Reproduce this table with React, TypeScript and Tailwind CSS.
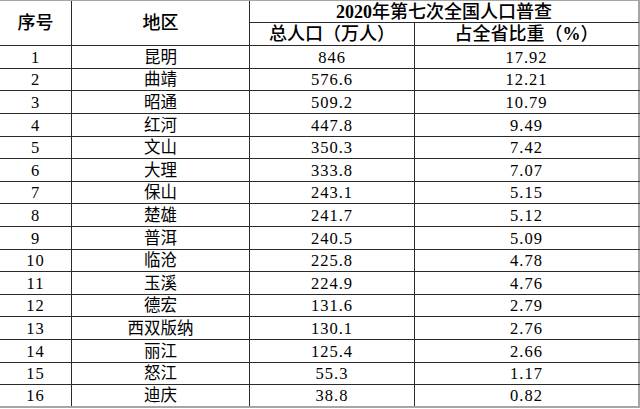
import React from 'react';

const rows: [string, string, string, string][] = [
  ['1', '昆明', '846', '17.92'],
  ['2', '曲靖', '576.6', '12.21'],
  ['3', '昭通', '509.2', '10.79'],
  ['4', '红河', '447.8', '9.49'],
  ['5', '文山', '350.3', '7.42'],
  ['6', '大理', '333.8', '7.07'],
  ['7', '保山', '243.1', '5.15'],
  ['8', '楚雄', '241.7', '5.12'],
  ['9', '普洱', '240.5', '5.09'],
  ['10', '临沧', '225.8', '4.78'],
  ['11', '玉溪', '224.9', '4.76'],
  ['12', '德宏', '131.6', '2.79'],
  ['13', '西双版纳', '130.1', '2.76'],
  ['14', '丽江', '125.4', '2.66'],
  ['15', '怒江', '55.3', '1.17'],
  ['16', '迪庆', '38.8', '0.82'],
];

// row heights add up to 362px so the last line lands at y=407
const tall = [0, 2, 3, 5, 7, 8, 10, 12, 13, 15];

const App = () => {
  return (
    <div
      className="w-[640px] h-[409px] bg-white text-black text-[16.5px] leading-none"
      style={{ fontFamily: '"Liberation Serif", "Noto Sans CJK SC", serif' }}
    >
      <div className="flex border-t border-[#a6a6a6] text-[18px] font-medium">
        <div className="w-[72px] h-[45px] flex items-center justify-center border-r border-b border-[#2b2b2b]">
          序号
        </div>
        <div className="w-[178px] h-[45px] flex items-center justify-center border-r border-b border-[#2b2b2b]">
          地区
        </div>
        <div className="w-[390px] flex flex-col">
          <div className="h-[22px] flex items-center justify-center border-b border-[#2b2b2b] border-r-2 border-r-[#a6a6a6]">
            <span className="font-bold">2020</span>年第七次全国人口普查
          </div>
          <div className="flex h-[23px]">
            <div className="w-[165px] flex items-center justify-center border-r border-b border-[#2b2b2b]">
              总人口（万人）
            </div>
            <div className="w-[225px] flex items-center justify-center border-b border-[#2b2b2b] border-r-2 border-r-[#a6a6a6]">
              占全省比重（<span className="font-bold">%</span>）
            </div>
          </div>
        </div>
      </div>

      {rows.map(([no, name, pop, share], i) => {
        const last = i === rows.length - 1;
        return (
          <div
            key={no}
            className={`flex ${tall.includes(i) ? 'h-[23px]' : 'h-[22px]'} ${last ? 'border-b-2 border-[#a6a6a6]' : 'border-b border-[#2b2b2b]'}`}
          >
            <div className="w-[72px] flex items-center justify-center border-r border-[#2b2b2b] pt-[2px] tracking-[1px]">
              {no}
            </div>
            <div className="w-[178px] flex items-center justify-center border-r border-[#2b2b2b] pt-[2px]">
              {name}
            </div>
            <div className="w-[165px] flex items-center justify-center border-r border-[#2b2b2b] pt-[2px] tracking-[1px]">
              {pop}
            </div>
            <div className="w-[225px] flex items-center justify-center border-r-2 border-[#a6a6a6] pt-[2px] tracking-[1px]">
              {share}
            </div>
          </div>
        );
      })}
    </div>
  );
};

export default App;
